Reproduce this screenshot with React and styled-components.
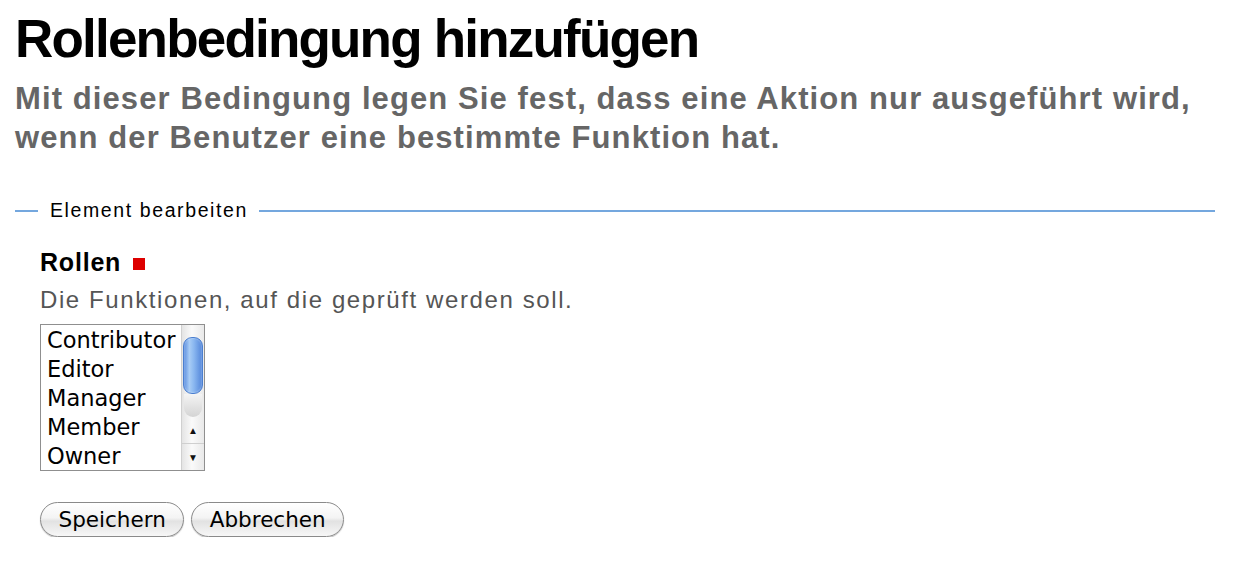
import React from "react";
import styled, { createGlobalStyle } from "styled-components";

const GlobalStyle = createGlobalStyle`
  html, body {
    margin: 0;
    padding: 0;
    background: #ffffff;
  }
  body {
    font-family: "Liberation Sans", Arial, sans-serif;
    color: #000;
  }
`;

const Page = styled.div`
  padding: 12px 26px 0 15px;
`;

const Title = styled.h1`
  margin: 0;
  font-size: 53px;
  line-height: 54px;
  font-weight: 700;
  letter-spacing: -1.8px;
  color: #000;
`;

const Lead = styled.p`
  margin: 13px 0 0;
  font-size: 31px;
  line-height: 39px;
  font-weight: 700;
  letter-spacing: 1.1px;
  color: #666;
`;

const Fieldset = styled.fieldset`
  margin: 42px 0 0;
  padding: 0 0 0 25px;
  border: none;
  border-top: 2px solid #74a7de;
  min-width: 0;
`;

const Legend = styled.legend`
  margin-left: -2px;
  padding: 0 11px 0 12px;
  font-size: 19.5px;
  letter-spacing: 1.6px;
  color: #000;
`;

const FieldLabel = styled.div`
  margin-top: 26px;
  display: flex;
  align-items: center;
  gap: 12px;
  font-size: 25px;
  font-weight: 700;
  letter-spacing: 0.8px;
`;

const Required = styled.span`
  width: 12px;
  height: 12px;
  background: #dd0000;
  margin-top: 3px;
`;

const Help = styled.div`
  margin-top: 9px;
  font-size: 24px;
  letter-spacing: 1.6px;
  color: #555;
`;

const ListBox = styled.div`
  margin-top: 10px;
  width: 163px;
  height: 145px;
  border: 1px solid #8f8f8f;
  display: flex;
  background: #fff;
`;

const Options = styled.ul`
  flex: 1;
  margin: 0;
  padding: 0 0 0 6px;
  list-style: none;
  overflow: hidden;
  font-family: "DejaVu Sans", sans-serif;
  font-size: 22.5px;
`;

const Option = styled.li`
  height: 29px;
  line-height: 31px;
  white-space: nowrap;
`;

const Track = styled.div`
  width: 22px;
  display: flex;
  flex-direction: column;
  align-items: center;
  background: linear-gradient(to right, #e4e4e4, #fafafa 45%, #e9e9e9);
  border-left: 1px solid #d0d0d0;
`;

const Thumb = styled.div`
  margin-top: 12px;
  width: 18px;
  height: 55px;
  border-radius: 9px;
  border: 1px solid #4b7fd0;
  background: linear-gradient(
    to right,
    #5d8fe0 0%,
    #a8ccf5 30%,
    #8ab7f0 55%,
    #5487da 100%
  );
  box-shadow: inset 0 0 2px rgba(255, 255, 255, 0.6);
`;

const TrackEnd = styled.div`
  width: 18px;
  height: 24px;
  border-radius: 0 0 9px 9px;
  background: linear-gradient(to bottom, #f4f4f4, #d4d4d4);
`;

const Spacer = styled.div`
  flex: 1;
`;

const Arrow = styled.div`
  width: 100%;
  height: 26px;
  display: flex;
  align-items: center;
  justify-content: center;
  border-top: ${(p) => (p.$divided ? "1px solid #cfcfcf" : "none")};
  font-size: 10px;
  color: #111;
`;

const Actions = styled.div`
  margin-top: 31px;
  display: flex;
  gap: 7px;
`;

const Button = styled.button`
  height: 35px;
  padding: 0 17.5px;
  border-radius: 18px;
  border: 1.5px solid #8a8a8a;
  background: linear-gradient(
    to bottom,
    #ffffff 0%,
    #f4f4f4 45%,
    #e2e2e2 55%,
    #f7f7f7 100%
  );
  box-shadow: 0 1px 1px rgba(0, 0, 0, 0.25);
  font-family: "DejaVu Sans", sans-serif;
  font-size: 21.5px;
  color: #000;
  line-height: 1;
`;

const roles = ["Contributor", "Editor", "Manager", "Member", "Owner"];

export default function App() {
  return (
    <>
      <GlobalStyle />
      <Page>
        <Title>Rollenbedingung hinzufügen</Title>
        <Lead>
          Mit dieser Bedingung legen Sie fest, dass eine Aktion nur ausgeführt wird,
          <br />
          wenn der Benutzer eine bestimmte Funktion hat.
        </Lead>
        <Fieldset>
          <Legend>Element bearbeiten</Legend>
          <FieldLabel>
            Rollen <Required />
          </FieldLabel>
          <Help>Die Funktionen, auf die geprüft werden soll.</Help>
          <ListBox>
            <Options>
              {roles.map((r) => (
                <Option key={r}>{r}</Option>
              ))}
            </Options>
            <Track>
              <Thumb />
              <TrackEnd />
              <Spacer />
              <Arrow>▲</Arrow>
              <Arrow $divided>▼</Arrow>
            </Track>
          </ListBox>
          <Actions>
            <Button>Speichern</Button>
            <Button>Abbrechen</Button>
          </Actions>
        </Fieldset>
      </Page>
    </>
  );
}
